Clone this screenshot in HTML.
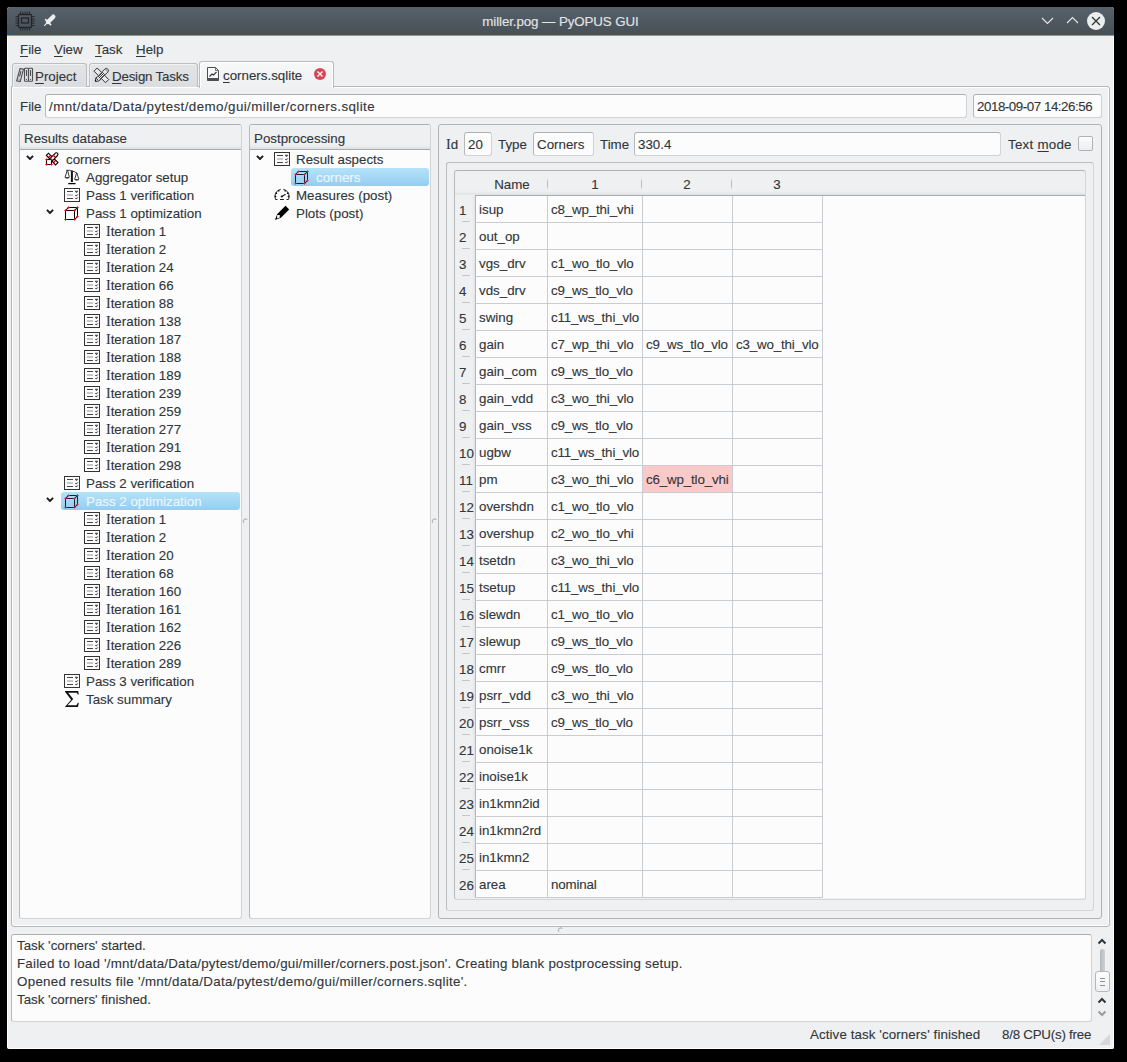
<!DOCTYPE html><html><head><meta charset='utf-8'><style>
*{box-sizing:border-box;margin:0;padding:0}
html,body{width:1127px;height:1062px;background:#000;overflow:hidden}
body{font-family:"Liberation Sans",sans-serif;font-size:13.33px;color:#31363b;position:relative;-webkit-text-stroke-width:0.12px}
.a{position:absolute}
.t{position:absolute;white-space:pre;line-height:20px;height:20px}
.u{text-decoration:underline;text-decoration-thickness:1px;text-underline-offset:2px}
svg{position:absolute;overflow:visible}
.si{font-family:"Liberation Serif",serif;font-size:14px}
</style></head><body>
<svg width="0" height="0" style="position:absolute">
<defs>
<symbol id="ilist" viewBox="0 0 20 20"><rect x="2.5" y="2.5" width="15" height="13" fill="none" stroke="#333" stroke-width="1"/>
<path d="M5 5.5h6M5 12.5h6" stroke="#444" stroke-width="1"/><path d="M5 9h6" stroke="#bbb" stroke-width="1.6"/>
<path d="M13.2 5.2h2.5l-1.2 1.5zM13.2 9.3l1.2.6 1.5-1.5M13.2 12.3l1.2.6 1.5-1.5" stroke="#444" stroke-width="0.9" fill="#444"/></symbol>
<symbol id="icube" viewBox="0 0 20 20"><path d="M3.5 6.5h9v9h-9zM12.5 6.5l3-3v9l-3 3M3.5 6.5l3-3h9" fill="none" stroke="#000" stroke-width="1.05"/><path d="M3.5 4.7L3.92 6.08L5.3 6.5L3.92 6.92L3.5 8.3L3.08 6.92L1.7 6.5L3.08 6.08ZM12.5 4.7L12.92 6.08L14.3 6.5L12.92 6.92L12.5 8.3L12.08 6.92L10.7 6.5L12.08 6.08ZM3.5 13.7L3.92 15.08L5.3 15.5L3.92 15.92L3.5 17.3L3.08 15.92L1.7 15.5L3.08 15.08ZM12.5 13.7L12.92 15.08L14.3 15.5L12.92 15.92L12.5 17.3L12.08 15.92L10.7 15.5L12.08 15.08ZM6.5 1.7L6.92 3.08L8.3 3.5L6.92 3.92L6.5 5.3L6.08 3.92L4.7 3.5L6.08 3.08ZM15.5 1.7L15.92 3.08L17.3 3.5L15.92 3.92L15.5 5.3L15.08 3.92L13.7 3.5L15.08 3.08ZM15.5 10.7L15.92 12.08L17.3 12.5L15.92 12.92L15.5 14.3L15.08 12.92L13.7 12.5L15.08 12.08Z" fill="#f00"/></symbol>
<symbol id="icubes" viewBox="0 0 20 20"><path d="M3.5 6.5h9v9h-9zM12.5 6.5l3-3v9l-3 3M3.5 6.5l3-3h9" fill="none" stroke="#0f2433" stroke-width="1.05"/><path d="M3.5 4.7L3.92 6.08L5.3 6.5L3.92 6.92L3.5 8.3L3.08 6.92L1.7 6.5L3.08 6.08ZM12.5 4.7L12.92 6.08L14.3 6.5L12.92 6.92L12.5 8.3L12.08 6.92L10.7 6.5L12.08 6.08ZM3.5 13.7L3.92 15.08L5.3 15.5L3.92 15.92L3.5 17.3L3.08 15.92L1.7 15.5L3.08 15.08ZM12.5 13.7L12.92 15.08L14.3 15.5L12.92 15.92L12.5 17.3L12.08 15.92L10.7 15.5L12.08 15.08ZM6.5 1.7L6.92 3.08L8.3 3.5L6.92 3.92L6.5 5.3L6.08 3.92L4.7 3.5L6.08 3.08ZM15.5 1.7L15.92 3.08L17.3 3.5L15.92 3.92L15.5 5.3L15.08 3.92L13.7 3.5L15.08 3.08ZM15.5 10.7L15.92 12.08L17.3 12.5L15.92 12.92L15.5 14.3L15.08 12.92L13.7 12.5L15.08 12.08Z" fill="#d62839"/></symbol>
<symbol id="icorn" viewBox="0 0 20 20"><path d="M4.4 5.4L6.5 3.2 16 12.6 13.6 15z" fill="#fff" stroke="#000" stroke-width="1.1"/>
<path d="M15.5 5.5a1.6 1.6 0 0 0-2.4-2.2L6 10.5 8.5 12.8z" fill="#fff" stroke="#000" stroke-width="1.1"/>
<rect x="4.5" y="9.5" width="5" height="5" fill="#fff" stroke="#000" stroke-width="1.1"/>
<path d="M7.5 4.7L7.92 6.08L9.3 6.5L7.92 6.92L7.5 8.3L7.08 6.92L5.7 6.5L7.08 6.08ZM12.5 4.7L12.92 6.08L14.3 6.5L12.92 6.92L12.5 8.3L12.08 6.92L10.7 6.5L12.08 6.08ZM4.5 7.7L4.92 9.08L6.3 9.5L4.92 9.92L4.5 11.3L4.08 9.92L2.7 9.5L4.08 9.08ZM9.5 7.7L9.92 9.08L11.3 9.5L9.92 9.92L9.5 11.3L9.08 9.92L7.7 9.5L9.08 9.08ZM4.5 12.7L4.92 14.08L6.3 14.5L4.92 14.92L4.5 16.3L4.08 14.92L2.7 14.5L4.08 14.08ZM9.5 12.7L9.92 14.08L11.3 14.5L9.92 14.92L9.5 16.3L9.08 14.92L7.7 14.5L9.08 14.08ZM12.5 9.7L12.92 11.08L14.3 11.5L12.92 11.92L12.5 13.3L12.08 11.92L10.7 11.5L12.08 11.08Z" fill="#f00"/></symbol>
<symbol id="ichev" viewBox="0 0 8 5"><path d="M0.9 0.9L4 4 7.1 0.9" fill="none" stroke="#1d2024" stroke-width="2"/></symbol>
</defs></svg>
<div class='a' style='left:7px;top:7px;width:1107px;height:1042px;background:#eff0f1;border:1px solid #fff;border-top:none;border-radius:3px 3px 2px 2px'></div>
<div class='a' style='left:7px;top:7px;width:1107px;height:28px;background:linear-gradient(#57616a,#475057);border-radius:3px 3px 0 0'></div>
<div class='a' style='left:7px;top:35px;width:1107px;height:1px;background:#3daee9'></div>
<div class='t' style='left:7px;width:1107px;top:12px;text-align:center;color:#e3e5e7;letter-spacing:-0.09px'>miller.pog — PyOPUS GUI</div>
<div class='t' style='left:20px;top:40px'><span class='u'>F</span>ile</div>
<div class='t' style='left:54px;top:40px'><span class='u'>V</span>iew</div>
<div class='t' style='left:95px;top:40px'><span class='u'>T</span>ask</div>
<div class='t' style='left:136px;top:40px'><span class='u'>H</span>elp</div>
<div class='a' style='left:11px;top:86px;width:1099px;height:841px;border:1px solid #b4b7ba;border-radius:0 3px 3px 3px;background:#eff0f1;box-shadow:inset 0 0 0 1px #fff'></div>
<div class='a' style='left:12px;top:63px;width:75px;height:24px;border:1px solid #bbbec1;border-bottom:none;border-radius:3px 3px 0 0;background:linear-gradient(#e2e4e6,#dbdde0);box-shadow:inset 1px 1px 0 rgba(255,255,255,0.5)'></div>
<div class='a' style='left:89px;top:63px;width:109px;height:24px;border:1px solid #bbbec1;border-bottom:none;border-radius:3px 3px 0 0;background:linear-gradient(#e2e4e6,#dbdde0);box-shadow:inset 1px 1px 0 rgba(255,255,255,0.5)'></div>
<div class='a' style='left:199px;top:61px;width:135px;height:27px;border:1px solid #bbbec1;border-bottom:none;border-radius:3px 3px 0 0;background:linear-gradient(#f7f8f8,#eff0f1);box-shadow:inset -1px 1px 0 #fff,inset 1px 0 0 #fff'></div>
<div class='t' style='left:35px;top:67px'><span class='u'>P</span>roject</div>
<div class='t' style='left:112px;top:67px;letter-spacing:-0.2px'><span class='u'>D</span>esign Tasks</div>
<div class='t' style='left:223px;top:66px'><span class='u'>c</span>orners.sqlite</div>
<svg style='left:314px;top:68px' width='12' height='12'><circle cx='6' cy='6' r='6' fill='#da4453'/><path d='M3.5 3.5l5 5M8.5 3.5l-5 5' stroke='#fff' stroke-width='1.3'/></svg>
<div class='t' style='left:20px;top:97px'>File</div>
<div class='a' style='left:45px;top:94px;width:922px;height:24px;border:1px solid;border-color:#adb0b3 #d0d2d4 #d0d2d4 #b6b9bc;border-radius:3px;background:#fcfcfc'></div>
<div class='t' style='left:49px;top:97px;letter-spacing:0.43px'>/mnt/data/Data/pytest/demo/gui/miller/corners.sqlite</div>
<div class='a' style='left:973px;top:94px;width:129px;height:24px;border:1px solid;border-color:#adb0b3 #d0d2d4 #d0d2d4 #b6b9bc;border-radius:3px;background:#fcfcfc'></div>
<div class='t' style='left:977px;top:97px;letter-spacing:-0.45px'>2018-09-07 14:26:56</div>
<div class='a' style='left:19px;top:124px;width:223px;height:795px;border:1px solid;border-color:#adb0b3 #d0d2d4 #d0d2d4 #b6b9bc;border-radius:3px;background:#fcfcfc'></div>
<div class='a' style='left:20px;top:125px;width:221px;height:25px;background:linear-gradient(#eff0f1 0,#eff0f1 20px,#dcdee0 24px);border-bottom:1px solid #a9acaf;border-radius:2px 2px 0 0'></div>
<div class='t' style='left:24px;top:129px'>Results database</div>
<div class='a' style='left:249px;top:124px;width:182px;height:795px;border:1px solid;border-color:#adb0b3 #d0d2d4 #d0d2d4 #b6b9bc;border-radius:3px;background:#fcfcfc'></div>
<div class='a' style='left:250px;top:125px;width:180px;height:25px;background:linear-gradient(#eff0f1 0,#eff0f1 20px,#dcdee0 24px);border-bottom:1px solid #a9acaf;border-radius:2px 2px 0 0'></div>
<div class='t' style='left:254px;top:129px'>Postprocessing</div>
<svg style='left:26px;top:155px' width='8' height='5'><use href='#ichev'/></svg>
<svg style='left:42px;top:150px' width='20' height='20'><use href='#icorn'/></svg>
<div class='t' style='left:66px;top:150px;color:#31363b'>corners</div>
<svg style='left:62px;top:168px' width='20' height='20' viewBox='0 0 20 20'><path d='M9.9 2.5v11.5' stroke='#111' stroke-width='2'/><path d='M6.3 15.6h7.3' stroke='#000' stroke-width='1.3'/><path d='M4.2 2.3h3.5l2 1 2.5.2 3 2' fill='none' stroke='#222' stroke-width='0.9'/><path d='M5.2 2.5L3 9.3M5.6 2.5L7.3 9M14.6 4.8L12.7 11.3M14.8 4.8L16.8 11' fill='none' stroke='#222' stroke-width='0.9'/><path d='M2.8 9.2h4.8a2.4 1.4 0 0 1-4.8 0zM12.4 11.2h4.8a2.4 1.4 0 0 1-4.8 0z' fill='#000'/></svg>
<div class='t' style='left:86px;top:168px;color:#31363b'>Aggregator setup</div>
<svg style='left:62px;top:186px' width='20' height='20'><use href='#ilist'/></svg>
<div class='t' style='left:86px;top:186px;color:#31363b'>Pass 1 verification</div>
<svg style='left:46px;top:209px' width='8' height='5'><use href='#ichev'/></svg>
<svg style='left:62px;top:204px' width='20' height='20'><use href='#icube'/></svg>
<div class='t' style='left:86px;top:204px;color:#31363b'>Pass 1 optimization</div>
<svg style='left:82px;top:222px' width='20' height='20'><use href='#ilist'/></svg>
<div class='t' style='left:106px;top:222px;color:#31363b'><span class='si'>I</span>teration 1</div>
<svg style='left:82px;top:240px' width='20' height='20'><use href='#ilist'/></svg>
<div class='t' style='left:106px;top:240px;color:#31363b'><span class='si'>I</span>teration 2</div>
<svg style='left:82px;top:258px' width='20' height='20'><use href='#ilist'/></svg>
<div class='t' style='left:106px;top:258px;color:#31363b'><span class='si'>I</span>teration 24</div>
<svg style='left:82px;top:276px' width='20' height='20'><use href='#ilist'/></svg>
<div class='t' style='left:106px;top:276px;color:#31363b'><span class='si'>I</span>teration 66</div>
<svg style='left:82px;top:294px' width='20' height='20'><use href='#ilist'/></svg>
<div class='t' style='left:106px;top:294px;color:#31363b'><span class='si'>I</span>teration 88</div>
<svg style='left:82px;top:312px' width='20' height='20'><use href='#ilist'/></svg>
<div class='t' style='left:106px;top:312px;color:#31363b'><span class='si'>I</span>teration 138</div>
<svg style='left:82px;top:330px' width='20' height='20'><use href='#ilist'/></svg>
<div class='t' style='left:106px;top:330px;color:#31363b'><span class='si'>I</span>teration 187</div>
<svg style='left:82px;top:348px' width='20' height='20'><use href='#ilist'/></svg>
<div class='t' style='left:106px;top:348px;color:#31363b'><span class='si'>I</span>teration 188</div>
<svg style='left:82px;top:366px' width='20' height='20'><use href='#ilist'/></svg>
<div class='t' style='left:106px;top:366px;color:#31363b'><span class='si'>I</span>teration 189</div>
<svg style='left:82px;top:384px' width='20' height='20'><use href='#ilist'/></svg>
<div class='t' style='left:106px;top:384px;color:#31363b'><span class='si'>I</span>teration 239</div>
<svg style='left:82px;top:402px' width='20' height='20'><use href='#ilist'/></svg>
<div class='t' style='left:106px;top:402px;color:#31363b'><span class='si'>I</span>teration 259</div>
<svg style='left:82px;top:420px' width='20' height='20'><use href='#ilist'/></svg>
<div class='t' style='left:106px;top:420px;color:#31363b'><span class='si'>I</span>teration 277</div>
<svg style='left:82px;top:438px' width='20' height='20'><use href='#ilist'/></svg>
<div class='t' style='left:106px;top:438px;color:#31363b'><span class='si'>I</span>teration 291</div>
<svg style='left:82px;top:456px' width='20' height='20'><use href='#ilist'/></svg>
<div class='t' style='left:106px;top:456px;color:#31363b'><span class='si'>I</span>teration 298</div>
<svg style='left:62px;top:474px' width='20' height='20'><use href='#ilist'/></svg>
<div class='t' style='left:86px;top:474px;color:#31363b'>Pass 2 verification</div>
<div class='a' style='left:61px;top:492px;width:179px;height:18px;border-radius:3px;background:linear-gradient(#b4e3f9,#95cdef)'></div>
<svg style='left:46px;top:497px' width='8' height='5'><use href='#ichev'/></svg>
<svg style='left:62px;top:492px' width='20' height='20'><use href='#icubes'/></svg>
<div class='t' style='left:86px;top:492px;color:#eef6fb'>Pass 2 optimization</div>
<svg style='left:82px;top:510px' width='20' height='20'><use href='#ilist'/></svg>
<div class='t' style='left:106px;top:510px;color:#31363b'><span class='si'>I</span>teration 1</div>
<svg style='left:82px;top:528px' width='20' height='20'><use href='#ilist'/></svg>
<div class='t' style='left:106px;top:528px;color:#31363b'><span class='si'>I</span>teration 2</div>
<svg style='left:82px;top:546px' width='20' height='20'><use href='#ilist'/></svg>
<div class='t' style='left:106px;top:546px;color:#31363b'><span class='si'>I</span>teration 20</div>
<svg style='left:82px;top:564px' width='20' height='20'><use href='#ilist'/></svg>
<div class='t' style='left:106px;top:564px;color:#31363b'><span class='si'>I</span>teration 68</div>
<svg style='left:82px;top:582px' width='20' height='20'><use href='#ilist'/></svg>
<div class='t' style='left:106px;top:582px;color:#31363b'><span class='si'>I</span>teration 160</div>
<svg style='left:82px;top:600px' width='20' height='20'><use href='#ilist'/></svg>
<div class='t' style='left:106px;top:600px;color:#31363b'><span class='si'>I</span>teration 161</div>
<svg style='left:82px;top:618px' width='20' height='20'><use href='#ilist'/></svg>
<div class='t' style='left:106px;top:618px;color:#31363b'><span class='si'>I</span>teration 162</div>
<svg style='left:82px;top:636px' width='20' height='20'><use href='#ilist'/></svg>
<div class='t' style='left:106px;top:636px;color:#31363b'><span class='si'>I</span>teration 226</div>
<svg style='left:82px;top:654px' width='20' height='20'><use href='#ilist'/></svg>
<div class='t' style='left:106px;top:654px;color:#31363b'><span class='si'>I</span>teration 289</div>
<svg style='left:62px;top:672px' width='20' height='20'><use href='#ilist'/></svg>
<div class='t' style='left:86px;top:672px;color:#31363b'>Pass 3 verification</div>
<svg style='left:62px;top:690px' width='20' height='20' viewBox='0 0 20 20'><path d='M3 1h13.2l.6 3.6h-.9l-1.1-1.9H6.2L11.2 9 5.6 15.2h8.8l1.5-2.4h.9L16 17H2.9L9.1 9.8 3 1.8z' fill='#111'/></svg>
<div class='t' style='left:86px;top:690px;color:#31363b'>Task summary</div>
<svg style='left:256px;top:155px' width='8' height='5'><use href='#ichev'/></svg>
<svg style='left:272px;top:150px' width='20' height='20'><use href='#ilist'/></svg>
<div class='t' style='left:296px;top:150px;color:#31363b'>Result aspects</div>
<div class='a' style='left:291px;top:168px;width:138px;height:18px;border-radius:3px;background:linear-gradient(#b4e3f9,#95cdef)'></div>
<svg style='left:292px;top:168px' width='20' height='20'><use href='#icubes'/></svg>
<div class='t' style='left:316px;top:168px;color:#eef6fb'>corners</div>
<svg style='left:272px;top:186px' width='20' height='20' viewBox='0 0 20 20'><path d='M3.55 13.5A7.2 7.2 0 0 1 8.75 3.31M11.25 3.31A7.2 7.2 0 0 1 16.55 13.5' fill='none' stroke='#2a2d30' stroke-width='1'/><path d='M3.5 13.5h2M14.5 13.5h2M8 13.5h4' stroke='#222' stroke-width='1.1'/><path d='M9.8 10.5l3.8-2.3' stroke='#222' stroke-width='1.1'/><g fill='#111'><circle cx='6.75' cy='4.77' r='0.85'/><circle cx='4.37' cy='7.15' r='0.85'/><circle cx='3.50' cy='10.40' r='0.85'/><circle cx='13.25' cy='4.77' r='0.85'/><circle cx='15.63' cy='7.15' r='0.85'/><circle cx='16.50' cy='10.40' r='0.85'/><circle cx='9.8' cy='10.5' r='1.1'/></g></svg>
<div class='t' style='left:296px;top:186px;color:#31363b'>Measures (post)</div>
<svg style='left:272px;top:204px' width='20' height='20' viewBox='0 0 20 20'><path d='M13.5 1.7l3.7 3.7-8.3 8.3-6 2.4 2.4-6z' fill='#000'/><path d='M5.3 11l2.4 0.1 0.1 2.5-2.8 1z' fill='#fff'/></svg>
<div class='t' style='left:296px;top:204px;color:#31363b'>Plots (post)</div>
<div class='a' style='left:438px;top:124px;width:664px;height:795px;border:1px solid #b1b4b7;border-radius:3px'></div>
<div class='t' style='left:446px;top:135px'><span class='si'>I</span>d</div>
<div class='a' style='left:464px;top:132px;width:28px;height:24px;border:1px solid;border-color:#adb0b3 #d0d2d4 #d0d2d4 #b6b9bc;border-radius:3px;background:#fcfcfc'></div>
<div class='t' style='left:468px;top:135px'>20</div>
<div class='t' style='left:498px;top:135px'>Type</div>
<div class='a' style='left:533px;top:132px;width:61px;height:24px;border:1px solid;border-color:#adb0b3 #d0d2d4 #d0d2d4 #b6b9bc;border-radius:3px;background:#fcfcfc'></div>
<div class='t' style='left:537px;top:135px'>Corners</div>
<div class='t' style='left:600px;top:135px'>Time</div>
<div class='a' style='left:634px;top:132px;width:367px;height:24px;border:1px solid;border-color:#adb0b3 #d0d2d4 #d0d2d4 #b6b9bc;border-radius:3px;background:#fcfcfc'></div>
<div class='t' style='left:638px;top:135px'>330.4</div>
<div class='t' style='left:1008px;top:135px;letter-spacing:0.25px'>Text <span class='u'>m</span>ode</div>
<div class='a' style='left:1078px;top:136px;width:15px;height:15px;border:1px solid #b0b3b6;border-radius:2px;background:linear-gradient(#fcfcfc,#eceded)'></div>
<div class='a' style='left:446px;top:162px;width:648px;height:749px;border:1px solid;border-color:#bcbfc1 #d3d5d7 #d3d5d7 #bcbfc1;border-radius:3px'></div>
<div class='a' style='left:454px;top:170px;width:632px;height:730px;border:1px solid;border-color:#b1b4b7 #d3d5d7 #d3d5d7 #b8bbbe;border-radius:3px;background:#eff0f1'></div>
<div class='a' style='left:455px;top:191px;width:630px;height:4px;background:linear-gradient(rgba(0,0,0,0),rgba(0,0,0,0.06))'></div>
<div class='a' style='left:472px;top:196px;width:3px;height:702px;background:linear-gradient(90deg,rgba(0,0,0,0),rgba(0,0,0,0.05))'></div>
<div class='a' style='left:476px;top:196px;width:609px;height:702px;background:#fcfcfc'></div>
<div class='a' style='left:475px;top:195px;width:610px;height:1px;background:#a9acaf'></div>
<div class='a' style='left:475px;top:196px;width:1px;height:702px;background:#b4b7ba'></div>
<div class='t' style='left:462px;width:100px;text-align:center;top:175px'>Name</div>
<div class='t' style='left:545px;width:100px;text-align:center;top:175px'>1</div>
<div class='t' style='left:637px;width:100px;text-align:center;top:175px'>2</div>
<div class='t' style='left:727px;width:100px;text-align:center;top:175px'>3</div>
<div class='a' style='left:547px;top:178px;width:1px;height:12px;background:linear-gradient(rgba(180,183,186,0),#b9bcbf 30%,#b9bcbf 70%,rgba(180,183,186,0))'></div>
<div class='a' style='left:641px;top:178px;width:1px;height:12px;background:linear-gradient(rgba(180,183,186,0),#b9bcbf 30%,#b9bcbf 70%,rgba(180,183,186,0))'></div>
<div class='a' style='left:731px;top:178px;width:1px;height:12px;background:linear-gradient(rgba(180,183,186,0),#b9bcbf 30%,#b9bcbf 70%,rgba(180,183,186,0))'></div>
<div class='a' style='left:643px;top:466px;width:89px;height:26px;background:#fcc9c9'></div>
<div class='t' style='left:459px;top:201px'>1</div>
<div class='a' style='left:462px;top:221px;width:8px;height:1px;background:#c4c7ca'></div>
<div class='t' style='left:479px;top:200px'>isup</div>
<div class='t' style='left:551px;top:200px;letter-spacing:-0.15px'>c8_wp_thi_vhi</div>
<div class='a' style='left:475px;top:222px;width:348px;height:1px;background:#c9cdd1'></div>
<div class='t' style='left:459px;top:228px'>2</div>
<div class='a' style='left:462px;top:248px;width:8px;height:1px;background:#c4c7ca'></div>
<div class='t' style='left:479px;top:227px'>out_op</div>
<div class='a' style='left:475px;top:249px;width:348px;height:1px;background:#c9cdd1'></div>
<div class='t' style='left:459px;top:255px'>3</div>
<div class='a' style='left:462px;top:275px;width:8px;height:1px;background:#c4c7ca'></div>
<div class='t' style='left:479px;top:254px'>vgs_drv</div>
<div class='t' style='left:551px;top:254px;letter-spacing:-0.15px'>c1_wo_tlo_vlo</div>
<div class='a' style='left:475px;top:276px;width:348px;height:1px;background:#c9cdd1'></div>
<div class='t' style='left:459px;top:282px'>4</div>
<div class='a' style='left:462px;top:302px;width:8px;height:1px;background:#c4c7ca'></div>
<div class='t' style='left:479px;top:281px'>vds_drv</div>
<div class='t' style='left:551px;top:281px;letter-spacing:-0.15px'>c9_ws_tlo_vlo</div>
<div class='a' style='left:475px;top:303px;width:348px;height:1px;background:#c9cdd1'></div>
<div class='t' style='left:459px;top:309px'>5</div>
<div class='a' style='left:462px;top:329px;width:8px;height:1px;background:#c4c7ca'></div>
<div class='t' style='left:479px;top:308px'>swing</div>
<div class='t' style='left:551px;top:308px;letter-spacing:-0.15px'>c11_ws_thi_vlo</div>
<div class='a' style='left:475px;top:330px;width:348px;height:1px;background:#c9cdd1'></div>
<div class='t' style='left:459px;top:336px'>6</div>
<div class='a' style='left:462px;top:356px;width:8px;height:1px;background:#c4c7ca'></div>
<div class='t' style='left:479px;top:335px'>gain</div>
<div class='t' style='left:551px;top:335px;letter-spacing:-0.15px'>c7_wp_thi_vlo</div>
<div class='t' style='left:646px;top:335px;letter-spacing:-0.15px'>c9_ws_tlo_vlo</div>
<div class='t' style='left:736px;top:335px;letter-spacing:-0.15px'>c3_wo_thi_vlo</div>
<div class='a' style='left:475px;top:357px;width:348px;height:1px;background:#c9cdd1'></div>
<div class='t' style='left:459px;top:363px'>7</div>
<div class='a' style='left:462px;top:383px;width:8px;height:1px;background:#c4c7ca'></div>
<div class='t' style='left:479px;top:362px'>gain_com</div>
<div class='t' style='left:551px;top:362px;letter-spacing:-0.15px'>c9_ws_tlo_vlo</div>
<div class='a' style='left:475px;top:384px;width:348px;height:1px;background:#c9cdd1'></div>
<div class='t' style='left:459px;top:390px'>8</div>
<div class='a' style='left:462px;top:410px;width:8px;height:1px;background:#c4c7ca'></div>
<div class='t' style='left:479px;top:389px'>gain_vdd</div>
<div class='t' style='left:551px;top:389px;letter-spacing:-0.15px'>c3_wo_thi_vlo</div>
<div class='a' style='left:475px;top:411px;width:348px;height:1px;background:#c9cdd1'></div>
<div class='t' style='left:459px;top:417px'>9</div>
<div class='a' style='left:462px;top:437px;width:8px;height:1px;background:#c4c7ca'></div>
<div class='t' style='left:479px;top:416px'>gain_vss</div>
<div class='t' style='left:551px;top:416px;letter-spacing:-0.15px'>c9_ws_tlo_vlo</div>
<div class='a' style='left:475px;top:438px;width:348px;height:1px;background:#c9cdd1'></div>
<div class='t' style='left:459px;top:444px'>10</div>
<div class='a' style='left:462px;top:464px;width:8px;height:1px;background:#c4c7ca'></div>
<div class='t' style='left:479px;top:443px'>ugbw</div>
<div class='t' style='left:551px;top:443px;letter-spacing:-0.15px'>c11_ws_thi_vlo</div>
<div class='a' style='left:475px;top:465px;width:348px;height:1px;background:#c9cdd1'></div>
<div class='t' style='left:459px;top:471px'>11</div>
<div class='a' style='left:462px;top:491px;width:8px;height:1px;background:#c4c7ca'></div>
<div class='t' style='left:479px;top:470px'>pm</div>
<div class='t' style='left:551px;top:470px;letter-spacing:-0.15px'>c3_wo_thi_vlo</div>
<div class='t' style='left:646px;top:470px;letter-spacing:-0.15px'>c6_wp_tlo_vhi</div>
<div class='a' style='left:475px;top:492px;width:348px;height:1px;background:#c9cdd1'></div>
<div class='t' style='left:459px;top:498px'>12</div>
<div class='a' style='left:462px;top:518px;width:8px;height:1px;background:#c4c7ca'></div>
<div class='t' style='left:479px;top:497px'>overshdn</div>
<div class='t' style='left:551px;top:497px;letter-spacing:-0.15px'>c1_wo_tlo_vlo</div>
<div class='a' style='left:475px;top:519px;width:348px;height:1px;background:#c9cdd1'></div>
<div class='t' style='left:459px;top:525px'>13</div>
<div class='a' style='left:462px;top:545px;width:8px;height:1px;background:#c4c7ca'></div>
<div class='t' style='left:479px;top:524px'>overshup</div>
<div class='t' style='left:551px;top:524px;letter-spacing:-0.15px'>c2_wo_tlo_vhi</div>
<div class='a' style='left:475px;top:546px;width:348px;height:1px;background:#c9cdd1'></div>
<div class='t' style='left:459px;top:552px'>14</div>
<div class='a' style='left:462px;top:572px;width:8px;height:1px;background:#c4c7ca'></div>
<div class='t' style='left:479px;top:551px'>tsetdn</div>
<div class='t' style='left:551px;top:551px;letter-spacing:-0.15px'>c3_wo_thi_vlo</div>
<div class='a' style='left:475px;top:573px;width:348px;height:1px;background:#c9cdd1'></div>
<div class='t' style='left:459px;top:579px'>15</div>
<div class='a' style='left:462px;top:599px;width:8px;height:1px;background:#c4c7ca'></div>
<div class='t' style='left:479px;top:578px'>tsetup</div>
<div class='t' style='left:551px;top:578px;letter-spacing:-0.15px'>c11_ws_thi_vlo</div>
<div class='a' style='left:475px;top:600px;width:348px;height:1px;background:#c9cdd1'></div>
<div class='t' style='left:459px;top:606px'>16</div>
<div class='a' style='left:462px;top:626px;width:8px;height:1px;background:#c4c7ca'></div>
<div class='t' style='left:479px;top:605px'>slewdn</div>
<div class='t' style='left:551px;top:605px;letter-spacing:-0.15px'>c1_wo_tlo_vlo</div>
<div class='a' style='left:475px;top:627px;width:348px;height:1px;background:#c9cdd1'></div>
<div class='t' style='left:459px;top:633px'>17</div>
<div class='a' style='left:462px;top:653px;width:8px;height:1px;background:#c4c7ca'></div>
<div class='t' style='left:479px;top:632px'>slewup</div>
<div class='t' style='left:551px;top:632px;letter-spacing:-0.15px'>c9_ws_tlo_vlo</div>
<div class='a' style='left:475px;top:654px;width:348px;height:1px;background:#c9cdd1'></div>
<div class='t' style='left:459px;top:660px'>18</div>
<div class='a' style='left:462px;top:680px;width:8px;height:1px;background:#c4c7ca'></div>
<div class='t' style='left:479px;top:659px'>cmrr</div>
<div class='t' style='left:551px;top:659px;letter-spacing:-0.15px'>c9_ws_tlo_vlo</div>
<div class='a' style='left:475px;top:681px;width:348px;height:1px;background:#c9cdd1'></div>
<div class='t' style='left:459px;top:687px'>19</div>
<div class='a' style='left:462px;top:707px;width:8px;height:1px;background:#c4c7ca'></div>
<div class='t' style='left:479px;top:686px'>psrr_vdd</div>
<div class='t' style='left:551px;top:686px;letter-spacing:-0.15px'>c3_wo_thi_vlo</div>
<div class='a' style='left:475px;top:708px;width:348px;height:1px;background:#c9cdd1'></div>
<div class='t' style='left:459px;top:714px'>20</div>
<div class='a' style='left:462px;top:734px;width:8px;height:1px;background:#c4c7ca'></div>
<div class='t' style='left:479px;top:713px'>psrr_vss</div>
<div class='t' style='left:551px;top:713px;letter-spacing:-0.15px'>c9_ws_tlo_vlo</div>
<div class='a' style='left:475px;top:735px;width:348px;height:1px;background:#c9cdd1'></div>
<div class='t' style='left:459px;top:741px'>21</div>
<div class='a' style='left:462px;top:761px;width:8px;height:1px;background:#c4c7ca'></div>
<div class='t' style='left:479px;top:740px'>onoise1k</div>
<div class='a' style='left:475px;top:762px;width:348px;height:1px;background:#c9cdd1'></div>
<div class='t' style='left:459px;top:768px'>22</div>
<div class='a' style='left:462px;top:788px;width:8px;height:1px;background:#c4c7ca'></div>
<div class='t' style='left:479px;top:767px'>inoise1k</div>
<div class='a' style='left:475px;top:789px;width:348px;height:1px;background:#c9cdd1'></div>
<div class='t' style='left:459px;top:795px'>23</div>
<div class='a' style='left:462px;top:815px;width:8px;height:1px;background:#c4c7ca'></div>
<div class='t' style='left:479px;top:794px'>in1kmn2id</div>
<div class='a' style='left:475px;top:816px;width:348px;height:1px;background:#c9cdd1'></div>
<div class='t' style='left:459px;top:822px'>24</div>
<div class='a' style='left:462px;top:842px;width:8px;height:1px;background:#c4c7ca'></div>
<div class='t' style='left:479px;top:821px'>in1kmn2rd</div>
<div class='a' style='left:475px;top:843px;width:348px;height:1px;background:#c9cdd1'></div>
<div class='t' style='left:459px;top:849px'>25</div>
<div class='a' style='left:462px;top:869px;width:8px;height:1px;background:#c4c7ca'></div>
<div class='t' style='left:479px;top:848px'>in1kmn2</div>
<div class='a' style='left:475px;top:870px;width:348px;height:1px;background:#c9cdd1'></div>
<div class='t' style='left:459px;top:876px'>26</div>
<div class='t' style='left:479px;top:875px'>area</div>
<div class='t' style='left:551px;top:875px;letter-spacing:-0.15px'>nominal</div>
<div class='a' style='left:475px;top:897px;width:348px;height:1px;background:#c9cdd1'></div>
<div class='a' style='left:547px;top:196px;width:1px;height:702px;background:#c9cdd1'></div>
<div class='a' style='left:642px;top:196px;width:1px;height:702px;background:#c9cdd1'></div>
<div class='a' style='left:732px;top:196px;width:1px;height:702px;background:#c9cdd1'></div>
<div class='a' style='left:822px;top:196px;width:1px;height:702px;background:#c9cdd1'></div>
<svg style='left:242px;top:517px' width='8' height='8' viewBox='0 0 8 8'><path d='M2.07 5.93A2.3 2.3 0 0 1 5.33 2.67' fill='none' stroke='#b3b6b9' stroke-width='1.1'/></svg>
<svg style='left:431px;top:517px' width='8' height='8' viewBox='0 0 8 8'><path d='M2.07 5.93A2.3 2.3 0 0 1 5.33 2.67' fill='none' stroke='#b3b6b9' stroke-width='1.1'/></svg>
<svg style='left:557px;top:926px' width='8' height='8' viewBox='0 0 8 8'><path d='M2.07 5.93A2.3 2.3 0 0 1 5.33 2.67' fill='none' stroke='#b3b6b9' stroke-width='1.1'/></svg>
<div class='a' style='left:11px;top:934px;width:1081px;height:88px;border:1px solid;border-color:#adb0b3 #d0d2d4 #d0d2d4 #b6b9bc;border-radius:3px;background:#fcfcfc'></div>
<div class='t' style='left:17px;top:936px;letter-spacing:0px'>Task &#39;corners&#39; started.</div>
<div class='t' style='left:17px;top:954px;letter-spacing:0.22px'>Failed to load &#39;/mnt/data/Data/pytest/demo/gui/miller/corners.post.json&#39;. Creating blank postprocessing setup.</div>
<div class='t' style='left:17px;top:972px;letter-spacing:0.31px'>Opened results file &#39;/mnt/data/Data/pytest/demo/gui/miller/corners.sqlite&#39;.</div>
<div class='t' style='left:17px;top:990px;letter-spacing:0px'>Task &#39;corners&#39; finished.</div>
<svg style='left:1097px;top:938px' width='10' height='7' viewBox='0 0 10 7'><path d='M1.5 5.5L5 2l3.5 3.5' fill='none' stroke='#31363b' stroke-width='2'/></svg>
<div class='a' style='left:1100px;top:949px;width:5px;height:25px;border-radius:2.5px 2.5px 0 0;background:linear-gradient(90deg,#b4b7ba,#d0d2d4)'></div>
<div class='a' style='left:1095px;top:971px;width:15px;height:21px;border:1px solid #b5b8bb;border-radius:3px;background:linear-gradient(#fdfdfd,#eef0f1)'></div>
<div class='a' style='left:1100px;top:978px;width:5px;height:1px;background:#8d9093;box-shadow:0 3px 0 #8d9093,0 7px 0 #8d9093'></div>
<svg style='left:1097px;top:997px' width='10' height='7' viewBox='0 0 10 7'><path d='M1.5 5.5L5 2l3.5 3.5' fill='none' stroke='#31363b' stroke-width='2'/></svg>
<svg style='left:1097px;top:1010px' width='10' height='7' viewBox='0 0 10 7'><path d='M1.5 1.5L5 5l3.5-3.5' fill='none' stroke='#9a9da0' stroke-width='2'/></svg>
<div class='t' style='left:810px;top:1025px;letter-spacing:0.1px'>Active task &#39;corners&#39; finished</div>
<div class='t' style='left:1002px;top:1025px;letter-spacing:-0.23px'>8/8 CPU(s) free</div>
<svg style='left:1099px;top:1034px' width='11' height='11'><path d='M11 0V11H0z' fill='#d5d7d9'/></svg>
<svg style='left:15px;top:11px' width='20' height='20' viewBox='0 0 20 20'>
<rect x='3.5' y='3.5' width='13' height='13' rx='1' fill='none' stroke='#232629' stroke-width='1.3'/>
<rect x='6.5' y='7' width='7' height='5' fill='none' stroke='#232629' stroke-width='1.3'/>
<path d='M5.5 0.5v2.5M7.8 0.5v2.5M10 0.5v2.5M12.2 0.5v2.5M14.5 0.5v2.5M5.5 17v2.5M7.8 17v2.5M10 17v2.5M12.2 17v2.5M14.5 17v2.5M0.5 5.5h2.5M0.5 7.8h2.5M0.5 10h2.5M0.5 12.2h2.5M0.5 14.5h2.5M17 5.5h2.5M17 7.8h2.5M17 10h2.5M17 12.2h2.5M17 14.5h2.5' stroke='#232629' stroke-width='0.9'/></svg>
<svg style='left:43px;top:14px' width='12' height='12' viewBox='0 0 12 12'><path d='M1.6 11.4L4.6 8.4' stroke='#eceded' stroke-width='1.2' stroke-linecap='round'/><path d='M2.6 5.6l5 5' stroke='#eceded' stroke-width='1.6' stroke-linecap='round'/><path d='M5 8l5.3-5.3' stroke='#eceded' stroke-width='4.4' stroke-linecap='round'/></svg>
<svg style='left:1041px;top:17px' width='13' height='8' viewBox='0 0 13 8'><path d='M1 1l5.5 5.5L12 1' fill='none' stroke='#e6e7e8' stroke-width='1.1'/></svg>
<svg style='left:1066px;top:16px' width='13' height='8' viewBox='0 0 13 8'><path d='M1 7l5.5-5.5L12 7' fill='none' stroke='#e6e7e8' stroke-width='1.1'/></svg>
<svg style='left:1087px;top:12px' width='18' height='18' viewBox='0 0 18 18'><circle cx='9' cy='9' r='9' fill='#eceded'/><path d='M5 5l8 8M13 5l-8 8' stroke='#31363b' stroke-width='1.3'/></svg>
<svg style='left:14px;top:64px' width='24' height='22' viewBox='0 0 24 22'><g fill='none' stroke='#4d4f52' stroke-width='1.1'><rect x='10.5' y='4.3' width='4' height='13' rx='0.8'/><rect x='14.5' y='4.3' width='4' height='13' rx='0.8'/><path d='M6 4.6l3.5 0.6-3.3 12.4-3.5-0.8z'/><path d='M12.5 6v6M16.5 6v6M7 7l-1.5 5.5'/></g><g fill='#4d4f52'><circle cx='12.5' cy='15.3' r='0.6'/><circle cx='16.5' cy='15.3' r='0.6'/><circle cx='5' cy='15' r='0.6'/></g></svg>
<svg style='left:90px;top:64px' width='24' height='22' viewBox='0 0 24 22'><defs><pattern id='chk' width='2' height='2' patternUnits='userSpaceOnUse'><rect width='2' height='2' fill='#e8e9ea'/><rect width='1' height='1' fill='#3a3d40'/><rect x='1' y='1' width='1' height='1' fill='#3a3d40'/></pattern></defs><g stroke='#333' stroke-width='1' fill='#e8e9ea'><path d='M4 7.2l3.2-3.2 11.5 11.5-3.2 3.2z'/><path d='M5.6 17.4l-0.3-0.3 0.5-3 9-9 a2 2 0 0 1 3 3l-9 9z'/></g><path d='M7.2 13l5.6-5.6 2.6 2.6-5.6 5.6z' fill='url(#chk)'/><path d='M14.8 5.8l1 -1 a2 2 0 0 1 2.2 2.2l-1 1z' fill='#a5a8ab'/><path d='M5.6 13.8l2.6 2.6' stroke='#333' stroke-width='1'/><path d='M5.2 17.2l0.8-0.8' stroke='#000' stroke-width='1.3'/></svg>
<svg style='left:207px;top:67px' width='12' height='14' viewBox='0 0 12 14'><path d='M0.5 0.5h8l3 3v10h-11z' fill='#f8f8f8' stroke='#4d4f52'/><path d='M8.5 0.5v3h3' fill='none' stroke='#4d4f52' stroke-width='0.8'/><path d='M2.5 9.5l2.5-2.5 1.5 1 3-3' fill='none' stroke='#31363b' stroke-width='1.1'/><path d='M0.5 11h11v2.5h-11z' fill='#4d4f52'/></svg>
</body></html>
